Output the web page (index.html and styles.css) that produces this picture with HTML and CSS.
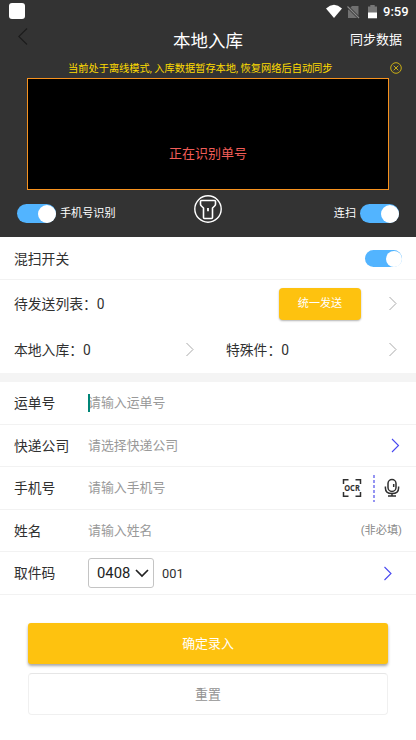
FILE: index.html
```html
<!DOCTYPE html>
<html lang="zh-CN">
<head>
<meta charset="utf-8">
<title>本地入库</title>
<link rel="stylesheet" href="styles.css">
</head>
<body>
<header class="top">
  <div class="status">
    <i class="status-app"></i>
    <svg class="status-icons" width="54" height="16" viewBox="0 0 54 16">
      <path d="M0 4.4Q8-2.8 16 4.4L8 14Z" fill="#fff"/>
      <path d="M26 2H32.5V14H22V6Z" fill="#717171"/>
      <path d="M21.5 2.5L33 14" stroke="#333" stroke-width="2.6"/>
      <path d="M21.5 2.5L33 14" stroke="#8a8a8a" stroke-width="1.1"/>
      <path d="M42 2.5H44.3V1H48.7V2.5H51V9H42Z" fill="#777"/>
      <path d="M42 8.5H51V14.3H42Z" fill="#fff"/>
    </svg>
    <span class="clock">9:59</span>
  </div>
  <div class="nav">
    <svg class="back" width="12" height="20" viewBox="0 0 12 20"><path d="M10 1.5L1.8 9.5L10 17.5" fill="none" stroke="#1c1c1c" stroke-width="1.1"/></svg>
    <h1>本地入库</h1>
    <span class="sync">同步数据</span>
  </div>
  <div class="notice">
    <span>当前处于离线模式, 入库数据暂存本地, 恢复网络后自动同步</span>
    <svg width="12" height="12" viewBox="0 0 12 12" fill="none" stroke="#d9bb12" stroke-width=".9"><circle cx="6" cy="6" r="5.3"/><path d="M3.7 3.7L8.3 8.3M8.3 3.7L3.7 8.3"/></svg>
  </div>
  <div class="scanner">正在识别单号</div>
  <div class="tools">
    <div class="tool"><i class="switch"></i><span>手机号识别</span></div>
    <svg class="torch" width="30" height="30" viewBox="0 0 30 30" fill="none" stroke="#fff" stroke-width="1.4"><circle cx="15" cy="15" r="13.2"/><path stroke-width="1.6" stroke-linejoin="round" d="M8.5 6.5H21.5Q22.5 6.5 22.5 7.5V10.3Q22.5 11.2 21.6 12L19.5 14V23.5Q19.5 24.5 18.5 24.5H11.5Q10.5 24.5 10.5 23.5V14L8.4 12Q7.5 11.2 7.5 10.3V7.5Q7.5 6.5 8.5 6.5Z"/><path stroke-width="1.8" d="M15 14V17.3"/></svg>
    <div class="tool"><span>连扫</span><i class="switch"></i></div>
  </div>
</header>

<section class="summary">
  <div class="row mix"><span>混扫开关</span><i class="switch small"></i></div>
  <div class="row pending">
    <span>待发送列表：0</span>
    <button class="send">统一发送</button>
    <svg class="chev" width="9" height="15" viewBox="0 0 9 15"><path d="M1.5 1L8 7.5L1.5 14"/></svg>
  </div>
  <div class="pair">
    <div class="cell"><span>本地入库：0</span><svg class="chev" width="9" height="15" viewBox="0 0 9 15"><path d="M1.5 1L8 7.5L1.5 14"/></svg></div>
    <div class="cell"><span>特殊件：0</span><svg class="chev" width="9" height="15" viewBox="0 0 9 15"><path d="M1.5 1L8 7.5L1.5 14"/></svg></div>
  </div>
</section>

<section class="form">
  <div class="row"><span class="label">运单号</span><span class="hint focus">请输入运单号</span></div>
  <div class="row short"><span class="label">快递公司</span><span class="hint">请选择快递公司</span><svg class="chev blue company" width="9" height="15" viewBox="0 0 9 15"><path d="M1 1L7.5 7.5L1 14"/></svg></div>
  <div class="row">
    <span class="label">手机号</span><span class="hint">请输入手机号</span>
    <svg class="ocr" width="20" height="20" viewBox="0 0 20 20"><path d="M1.5 6V1.7H6.5M13.5 1.7H18.5V6M18.5 14V18.3H13.5M6.5 18.3H1.5V14" fill="none" stroke="#303030" stroke-width="1.5"/><text x="2.2" y="13" textLength="15.6" lengthAdjust="spacingAndGlyphs">OCR</text></svg>
    <svg class="dash" width="2" height="27" viewBox="0 0 2 27"><path d="M1 0V27" stroke="#7b7bef" stroke-width="1.6" stroke-dasharray="3 2"/></svg>
    <svg class="mic" width="16" height="20" viewBox="0 0 16 20" fill="none" stroke="#303030" stroke-width="1.5"><rect x="4" y="1.5" width="8" height="12" rx="4"/><path d="M1.4 8.5V10Q1.4 15.6 8 15.6T14.6 10V8.5M8 15.6V18M4 18H12M9.7 6V9"/></svg>
  </div>
  <div class="row short"><span class="label">姓名</span><span class="hint">请输入姓名</span><span class="optional">(非必填)</span></div>
  <div class="row">
    <span class="label">取件码</span>
    <div class="select"><span>0408</span><svg width="14" height="9" viewBox="0 0 14 9"><path d="M1 1L7 7L13 1" fill="none" stroke="#222" stroke-width="1.7"/></svg></div>
    <span class="code">001</span>
    <svg class="chev blue pickup" width="9" height="15" viewBox="0 0 9 15"><path d="M1.5 1L8 7.5L1.5 14"/></svg>
  </div>
</section>

<div class="actions">
  <button class="submit">确定录入</button>
  <button class="reset">重置</button>
</div>
</body>
</html>
```
FILE: styles.css
```css
* { box-sizing: border-box; }
body {
  margin: 0;
  width: 416px;
  height: 740px;
  overflow: hidden;
  background: #fff;
  color: #303030;
  font-family: Roboto, "Noto Sans CJK SC", sans-serif;
  font-size: 13.8px;
  line-height: 20px;
}
svg { display: block; flex: none; }
button { border: 0; padding: 0; font: inherit; }

.top { height: 237px; background: #333; color: #fff; }
.status { height: 24px; display: flex; align-items: center; padding: 0 7px 0 9px; }
.status-app { width: 16px; height: 16px; border-radius: 3px; background: #fff; margin-top: -2px; }
.status-icons { margin-left: auto; margin-right: 3px; }
.clock { width: 26px; font-size: 13px; font-weight: 500; white-space: nowrap; }
.nav { height: 35px; display: grid; grid-template-columns: 1fr auto 1fr; align-items: center; padding: 0 14px 0 17px; }
.back { margin-top: -9px; }
.nav h1 { margin: -2px 0 0 -3px; font-size: 17.5px; font-weight: 400; line-height: 26px; }
.sync { justify-self: end; font-size: 13px; margin-top: -3px; }
.notice { height: 19px; display: flex; align-items: center; justify-content: space-between; padding: 0 14px 0 68px; font-size: 10.22px; color: #ffdc00; white-space: nowrap; }
.notice svg { margin-top: -1px; }
.scanner { width: 362px; height: 112px; margin-left: 27px; border: 1px solid #f7921e; background: #000; color: #f15d58; font-size: 13px; text-align: center; padding-top: 65px; }
.tools { height: 47px; display: flex; justify-content: space-between; padding: 0 17px; }
.tool { display: flex; align-items: center; gap: 4px; font-size: 11.1px; width: 120px; }
.tool span { padding-top: 1px; }
.tool:last-child { justify-content: flex-end; }
.torch { margin-top: 4px; }
.switch { position: relative; flex: none; width: 39px; height: 19px; border-radius: 10px; background: #52b4ff; }
.switch::after { content: ""; position: absolute; right: 0; top: .5px; width: 18px; height: 18px; border-radius: 50%; background: #fff; }
.switch.small { width: 37px; height: 17px; margin-left: auto; }
.switch.small::after { right: .5px; width: 16px; height: 16px; }

.summary { height: 145px; border-bottom: 9px solid #f4f4f4; }
.row { height: 43px; display: flex; align-items: center; padding: 0 14px; border-bottom: 1px solid #f2f2f2; }
.mix { padding-top: 1px; }
.pending { height: 47px; border: 0; padding-right: 19px; }
.send { width: 82px; height: 32px; margin-left: auto; margin-right: 27px; border-radius: 4px; background: #fec20f; color: #fff; font-size: 11.1px; box-shadow: 0 1px 2px rgba(0,0,0,.3); }
.pair { height: 46px; display: grid; grid-template-columns: 212px 204px; }
.cell { display: flex; align-items: center; justify-content: space-between; padding: 0 19px 0 14px; }
.cell:first-child { padding-right: 18px; }
.cell .chev { margin-top: -1px; }
.chev path { fill: none; stroke: #aaa; stroke-width: 1; }
.chev.blue path { stroke: #4848f0; stroke-width: 1.1; }

.row.short { height: 42px; }
.label { width: 74px; flex: none; }
.hint { color: #999; font-size: 12.9px; }
.focus { position: relative; }
.focus::before { content: ""; position: absolute; left: 0; top: 1px; width: 2px; height: 18px; background: #008577; }
.company { margin-left: auto; margin-right: 2px; }
.ocr { margin-left: auto; }
.ocr text { font: 700 8.2px "Noto Sans", sans-serif; fill: #303030; }
.dash { margin-left: 11px; }
.mic { margin-left: 9px; margin-right: 2px; }
.optional { margin-left: auto; color: #888; font-size: 11.2px; padding-top: 1px; }
.select { width: 66px; height: 30px; display: flex; align-items: center; justify-content: space-between; padding: 0 4px 0 8px; border: 1px solid #c4c4c4; border-radius: 3px; font-size: 14.8px; color: #222; }
.code { margin-left: 8px; font-size: 12.8px; padding-top: 1px; }
.pickup { margin-left: auto; margin-right: 10px; }

.actions { padding: 28px 28px 0; display: flex; flex-direction: column; gap: 9px; font-size: 12.9px; }
.submit { height: 41px; border-radius: 3px; background: #fec20f; color: #fff; box-shadow: 0 2px 3px rgba(0,0,0,.35); }
.reset { height: 42px; border: 1px solid #f0f0f0; border-top-color: #e6e6e6; border-radius: 4px; background: #fff; color: #929292; padding-top: 1px; }
```
